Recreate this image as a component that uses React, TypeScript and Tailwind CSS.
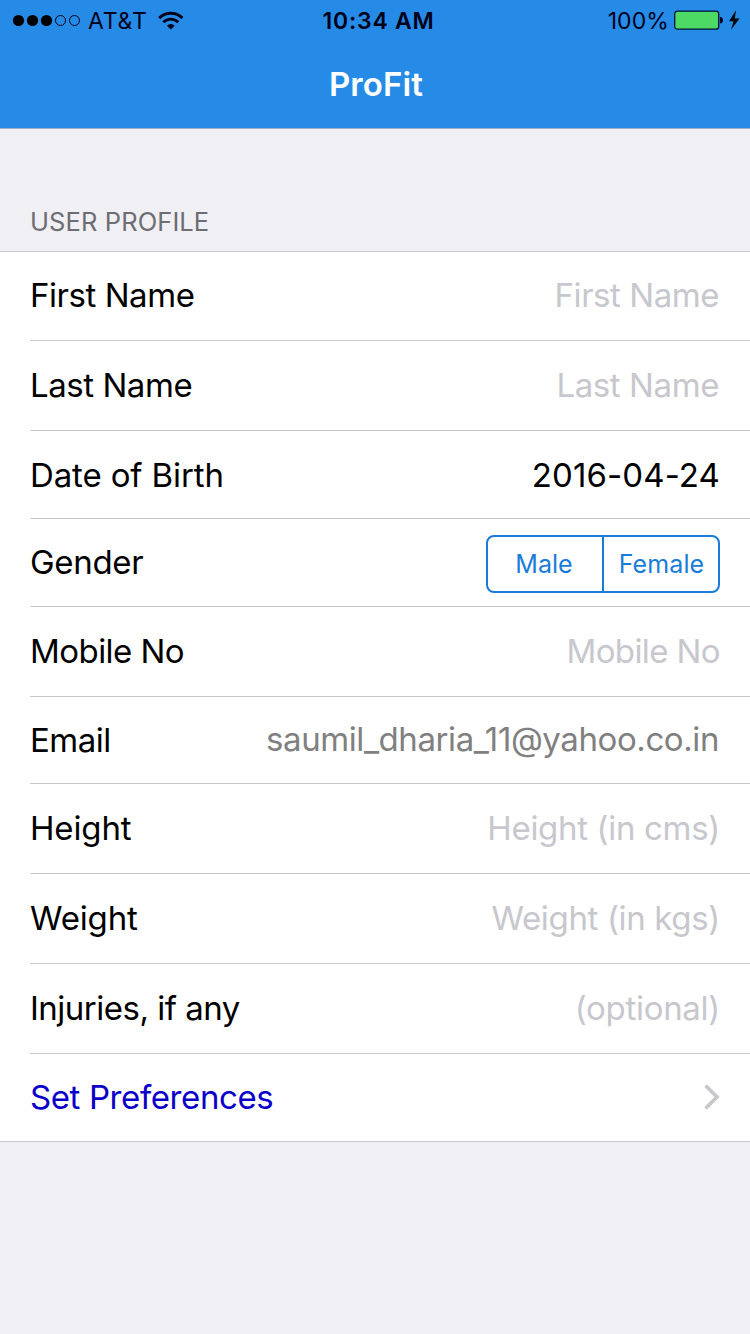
import type { ReactNode } from "react";

type RowProps = {
  label: string;
  height: string;
  labelClass?: string;
  nudge?: string;
  children: ReactNode;
  last?: boolean;
};

function Row({ label, height, labelClass = "", nudge = "pb-[2px]", children, last = false }: RowProps) {
  return (
    <div className={`${height} ${last ? "" : "pl-[30px]"} shrink-0`}>
      <div
        className={`flex h-full items-center justify-between border-b border-[#c8c7cc] pr-[30px] ${nudge} ${last ? "pl-[30px]" : ""}`}
      >
        <span className={`whitespace-nowrap ${labelClass}`}>{label}</span>
        {children}
      </div>
    </div>
  );
}

function Placeholder({ children, spacing }: { children: ReactNode; spacing: string }) {
  return <span className={`whitespace-nowrap text-[#c7c7cd] ${spacing}`}>{children}</span>;
}

function StatusBar() {
  return (
    <div className="grid h-[41px] grid-cols-3 items-center pt-px text-[23px] leading-10 text-[#00001a]">
      <div className="flex items-center pl-[12px]">
        <svg width="69" height="14" viewBox="0 0 69 14" className="mr-[7px]">
          <circle cx="6.5" cy="6.5" r="5.6" fill="#000" />
          <circle cx="20.5" cy="6.5" r="5.6" fill="#000" />
          <circle cx="34.5" cy="6.5" r="5.6" fill="#000" />
          <circle cx="48.5" cy="6.5" r="5" fill="none" stroke="#00001a" />
          <circle cx="62.5" cy="6.5" r="5" fill="none" stroke="#00001a" />
        </svg>
        <span className="tracking-[0.8px]">AT&amp;T</span>
        <svg
          width="26"
          height="19"
          viewBox="0 0 26 19"
          className="mb-[2px] ml-[10px]"
          fill="none"
          stroke="#00001a"
          strokeWidth="2.9"
        >
          <path d="M1.2 7.1a16.4 16.4 0 0 1 23.2 0" />
          <path d="M5.3 11.2a10.6 10.6 0 0 1 15 0" />
          <path d="M12.8 18.6 8.9 14.7a5.6 5.6 0 0 1 7.8 0Z" fill="#00001a" stroke="none" />
        </svg>
      </div>
      <div className="pl-[7px] text-center font-semibold tracking-[0.75px]">10:34 AM</div>
      <div className="flex items-center justify-end pr-[8px]">
        <span className="tracking-[0.1px]">100%</span>
        <svg width="68" height="22" viewBox="0 0 68 22" className="mb-[2px] ml-[5px]">
          <rect x="0.7" y="2.2" width="44" height="18" rx="2.8" fill="#4cd964" stroke="#00103a" strokeWidth="1.3" />
          <path d="M46 7.8c2 .3 3 1.6 3 3.4s-1 3.1-3 3.4Z" fill="#00001a" />
          <path d="M62 1.2 55 12.2h4.6L57 20.7 65.5 9.5h-4.7Z" fill="#000" />
        </svg>
      </div>
    </div>
  );
}

export default function App() {
  return (
    <div className="flex h-[1334px] w-[750px] flex-col overflow-hidden bg-[#efeff4] font-['Inter',sans-serif] text-[33px] leading-10 text-black">
      <header className="h-[129px] shrink-0 border-b border-[#9fb0c6] bg-[#268be7]">
        <StatusBar />
        <h1 className="flex h-[86px] items-center justify-center pl-[2px] text-[33px] font-semibold tracking-[0.1px] text-white">
          ProFit
        </h1>
      </header>

      <h2 className="flex h-[123px] shrink-0 items-end border-b border-[#c8c7cc] pb-[9px] pl-[30px] text-[25.5px] tracking-[0.1px] text-[#6d6d72]">
        USER PROFILE
      </h2>

      <main className="flex flex-col bg-white">
        <Row label="First Name" height="h-[89px]" labelClass="tracking-[-0.45px]">
          <Placeholder spacing="mr-px tracking-[-0.45px]">First Name</Placeholder>
        </Row>
        <Row label="Last Name" height="h-[90px]" labelClass="tracking-[-0.45px]">
          <Placeholder spacing="mr-px tracking-[-0.4px]">Last Name</Placeholder>
        </Row>
        <Row label="Date of Birth" height="h-[88px]" labelClass="tracking-[-0.13px]" nudge="pb-0">
          <span className="tracking-[0.1px]">2016-04-24</span>
        </Row>
        <Row label="Gender" height="h-[88px]" labelClass="pb-[4px] tracking-[-0.3px]" nudge="pt-[2px]">
          <div className="grid h-[58px] w-[234px] grid-cols-[114px_116px] rounded-lg border-2 border-[#1a7cd9] text-[25px] text-[#1a7cd9]">
            <button className="flex items-center justify-center pr-[2px]">Male</button>
            <button className="flex items-center justify-center border-l-2 border-[#1a7cd9] pl-px tracking-[0.1px]">
              Female
            </button>
          </div>
        </Row>
        <Row label="Mobile No" height="h-[90px]" labelClass="tracking-[-0.55px]">
          <Placeholder spacing="tracking-[-0.6px]">Mobile No</Placeholder>
        </Row>
        <Row label="Email" height="h-[87px]" labelClass="tracking-[-0.5px]" nudge="pb-0">
          <span className="mr-px pb-[2px] tracking-[-0.41px] text-[#808080]">saumil_dharia_11@yahoo.co.in</span>
        </Row>
        <Row label="Height" height="h-[90px]" labelClass="tracking-[-0.15px]">
          <Placeholder spacing="tracking-[-0.33px]">Height (in cms)</Placeholder>
        </Row>
        <Row label="Weight" height="h-[90px]" labelClass="tracking-[-0.15px]">
          <Placeholder spacing="tracking-[-0.35px]">Weight (in kgs)</Placeholder>
        </Row>
        <Row label="Injuries, if any" height="h-[90px]" labelClass="tracking-[-0.5px]">
          <Placeholder spacing="tracking-[-0.3px]">(optional)</Placeholder>
        </Row>
        <Row label="Set Preferences" height="h-[88px]" labelClass="tracking-[-0.4px] text-[#0b00c9]" last>
          <svg width="17" height="28" viewBox="0 0 17 28" fill="none" stroke="#c7c7cc" strokeWidth="3.7">
            <path d="m2.5 2.5 11.5 11.5-11.5 11.5" />
          </svg>
        </Row>
      </main>
    </div>
  );
}
